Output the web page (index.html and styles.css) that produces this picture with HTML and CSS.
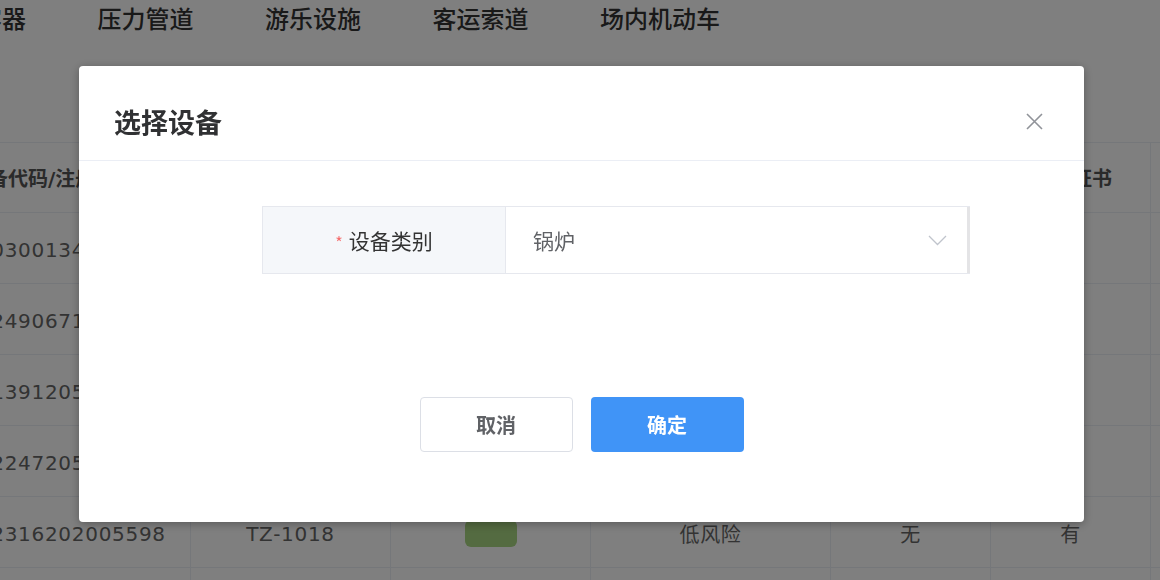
FILE: index.html
```html
<!DOCTYPE html>
<html lang="zh-CN">
<head>
    <meta charset="UTF-8">
    <meta name="viewport" content="width=device-width, initial-scale=1.0">
    <title>选择设备</title>
    <link rel="stylesheet" href="styles.css">
</head>
<body>
    <!-- Page behind the dialog -->
    <div class="page">
        <div class="tabs">
            <span class="tab">压力容器</span>
            <span class="tab">压力管道</span>
            <span class="tab">游乐设施</span>
            <span class="tab">客运索道</span>
            <span class="tab">场内机动车</span>
        </div>

        <div class="grid">
            <div class="grid-row grid-head">
                <div class="cell">设备代码/注册代码</div>
                <div class="cell">内部编号</div>
                <div class="cell">风险颜色</div>
                <div class="cell">风险等级</div>
                <div class="cell">隐患情况</div>
                <div class="cell">使用登记证书</div>
                <div class="cell"></div>
            </div>
            <div class="grid-row">
                <div class="cell">0300134201906</div>
                <div class="cell">TZ-1014</div>
                <div class="cell"><span class="badge badge-green"></span></div>
                <div class="cell">低风险</div>
                <div class="cell">无</div>
                <div class="cell">有</div>
                <div class="cell"></div>
            </div>
            <div class="grid-row">
                <div class="cell">2490671201808</div>
                <div class="cell">TZ-1015</div>
                <div class="cell"><span class="badge badge-yellow"></span></div>
                <div class="cell">一般风险</div>
                <div class="cell">无</div>
                <div class="cell">有</div>
                <div class="cell"></div>
            </div>
            <div class="grid-row">
                <div class="cell">1391205021853</div>
                <div class="cell">TZ-1016</div>
                <div class="cell"><span class="badge badge-green"></span></div>
                <div class="cell">低风险</div>
                <div class="cell">有</div>
                <div class="cell">有</div>
                <div class="cell"></div>
            </div>
            <div class="grid-row">
                <div class="cell">2247205116025</div>
                <div class="cell">TZ-1017</div>
                <div class="cell"><span class="badge badge-green"></span></div>
                <div class="cell">低风险</div>
                <div class="cell">无</div>
                <div class="cell">有</div>
                <div class="cell"></div>
            </div>
            <div class="grid-row">
                <div class="cell">2316202005598</div>
                <div class="cell">TZ-1018</div>
                <div class="cell"><span class="badge badge-green"></span></div>
                <div class="cell">低风险</div>
                <div class="cell">无</div>
                <div class="cell">有</div>
                <div class="cell"></div>
            </div>
            <div class="grid-row">
                <div class="cell"></div>
                <div class="cell"></div>
                <div class="cell"></div>
                <div class="cell"></div>
                <div class="cell"></div>
                <div class="cell"></div>
                <div class="cell"></div>
            </div>
        </div>
    </div>

    <!-- Dialog -->
    <div class="mask">
        <div class="dialog">
            <div class="dialog-header">
                <span class="dialog-title">选择设备</span>
                <button class="dialog-close" type="button">
                    <svg width="17" height="17" viewBox="0 0 17 17">
                        <path d="M1 1 L16 16 M16 1 L1 16" stroke="#909399" stroke-width="1.6" fill="none"/>
                    </svg>
                </button>
            </div>
            <div class="dialog-body">
                <div class="field">
                    <div class="field-label"><span class="req">*</span>设备类别</div>
                    <div class="field-value">
                        <span>锅炉</span>
                        <svg width="19" height="11" viewBox="0 0 19 11">
                            <path d="M1 1 L9.5 9.5 L18 1" stroke="#c0c4cc" stroke-width="1.3" fill="none"/>
                        </svg>
                    </div>
                </div>
            </div>
            <div class="dialog-footer">
                <button class="btn" type="button">取消</button>
                <button class="btn btn-primary" type="button">确定</button>
            </div>
        </div>
    </div>
</body>
</html>
```

FILE: styles.css
```css
/* General styling */
body {
    margin: 0;
    height: 580px;
    overflow: hidden;
    background-color: #fff;
    font-family: "Noto Sans CJK SC", sans-serif;
}

/* Page behind the dialog, scrolled sideways */
.page {
    margin-left: -70px;
}
.tabs {
    display: flex;
    gap: 71.5px;
    height: 36px;
    line-height: 36px;
    font-size: 24px;
    font-weight: 500;
    color: #333;
    white-space: nowrap;
}

/* Table */
.grid {
    margin-top: 106px;
    margin-left: 37px;
    border-top: 1px solid #ebeef5;
    font-family: "DejaVu Sans", "Noto Sans CJK SC", sans-serif;
    font-size: 20px;
    color: #666;
}
.grid-row {
    display: grid;
    grid-template-columns: 224px 200px 200px 240px 160px 160px 200px;
    height: 71px;
    letter-spacing: 0.7px;
}
.grid-head {
    height: 70px;
    font-weight: bold;
    color: #555;
    letter-spacing: 0;
}
.cell {
    box-sizing: border-box;
    display: flex;
    align-items: center;
    justify-content: center;
    padding-top: 3px;
    border-right: 1px solid #ebeef5;
    border-bottom: 1px solid #ebeef5;
    white-space: nowrap;
    overflow: hidden;
}
.grid-head .cell {
    justify-content: flex-start;
    padding-top: 0;
    padding-left: 1px;
}
.badge {
    width: 52px;
    height: 27px;
    border-radius: 6px;
}
.badge-green {
    background-color: #a9d682;
}
.badge-yellow {
    background-color: #f3d19e;
}

/* Dialog */
.mask {
    position: fixed;
    top: 0;
    left: 0;
    right: 0;
    bottom: 0;
    box-sizing: border-box;
    display: flex;
    align-items: flex-start;
    padding: 66px 0 0 79px;
    background-color: rgba(0, 0, 0, 0.5);
}
.dialog {
    width: 1005px;
    background-color: #fff;
    border-radius: 4px;
    box-shadow: 0 2px 10px rgba(0, 0, 0, 0.3);
}
.dialog-header {
    display: flex;
    justify-content: space-between;
    align-items: flex-start;
    padding: 38px 41px 20px 35px;
    border-bottom: 1px solid #ebeef5;
}
.dialog-title {
    font-size: 27px;
    line-height: 36px;
    font-weight: bold;
    color: #303133;
}
.dialog-close {
    margin-top: 9px;
    padding: 0;
    border: none;
    background: none;
    line-height: 0;
}
.dialog-body {
    padding: 45px 0 0 183px;
}

/* Form row */
.field {
    display: flex;
    width: 708px;
    height: 68px;
    box-sizing: border-box;
    border: 1px solid #e6e8ee;
    border-right: none;
    font-size: 21px;
}
.field-label {
    width: 243px;
    box-sizing: border-box;
    display: flex;
    align-items: center;
    justify-content: center;
    background-color: #f5f7fa;
    border-right: 1px solid #e6e8ee;
    color: #333;
}
.req {
    color: #f56c6c;
    font-size: 16px;
    margin-right: 6px;
    margin-top: 3px;
}
.field-value {
    flex: 1;
    display: flex;
    align-items: center;
    justify-content: space-between;
    padding: 0 20px 0 27px;
    border-right: 3px solid #e4e4e6;
    color: #606266;
}

/* Footer buttons */
.dialog-footer {
    display: flex;
    justify-content: center;
    gap: 18px;
    padding: 123px 0 70px;
}
.btn {
    width: 153px;
    height: 55px;
    border-radius: 4px;
    border: 1px solid #dcdfe6;
    background-color: #fff;
    color: #606266;
    font-family: "Noto Sans CJK SC", sans-serif;
    font-size: 20px;
    font-weight: 600;
}
.btn-primary {
    border: none;
    background-color: #4094f7;
    color: #fff;
}
```
